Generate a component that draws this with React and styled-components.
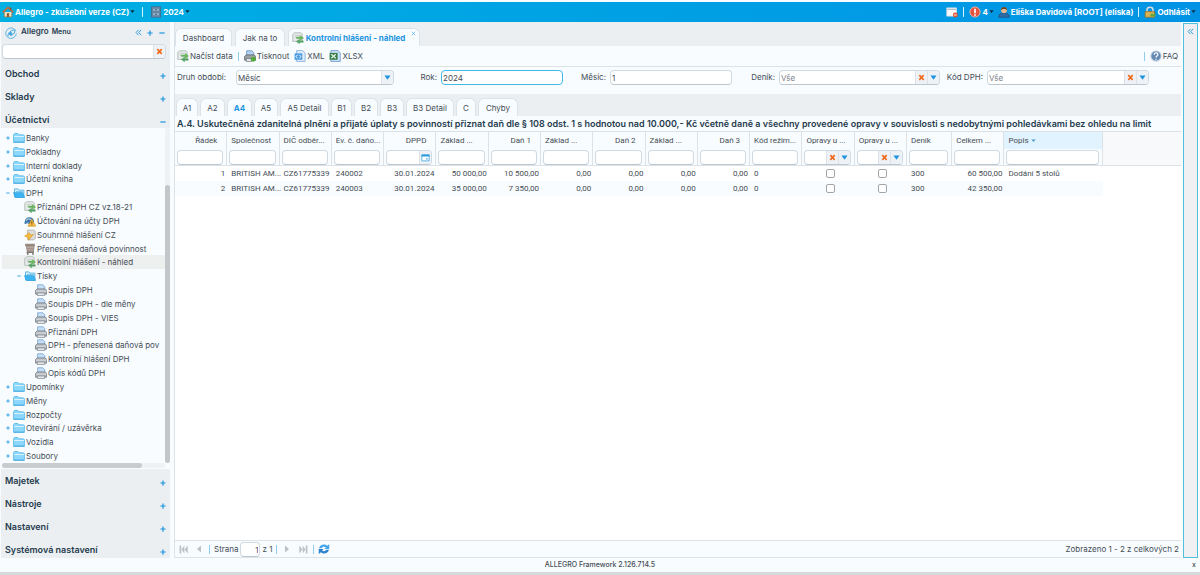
import React from "react";
import styled, { createGlobalStyle, css } from "styled-components";

const c = {
  pane: "#f8fcff",
  bar: "#eceff2",
  line: "#dbe3e9",
  text: "#454d55",
  dark: "#1f3b4d",
  blue: "#1c94e0",
  orange: "#f06a1d",
};

const Global = createGlobalStyle`
  *, *::before, *::after { box-sizing: border-box; }
  body {
    margin: 0;
    background: ${c.pane};
    color: ${c.text};
    font: 400 8px/12px Inter, "Open Sans", sans-serif;
  }
  button, input, select { font: inherit; color: inherit; margin: 0; padding: 0; border: 0; background: none; }
  button { cursor: pointer; }
  ul { list-style: none; margin: 0; padding: 0; }
  a { color: inherit; text-decoration: none; }
  svg { display: block; flex: none; }
`;

/* ---------- icons ---------- */

const Svg = ({ size = 12, children }) => (
  <svg width={size} height={size} viewBox="0 0 16 16" fill="none" aria-hidden="true">{children}</svg>
);

const icons = {
  folder: <>
    <path d="M.8 13.800V3.500L2 2h4.500L8 3.800h6L15.200 5v8.800z" fill="#8ed8fb" stroke="#4ab2e6" />
    <path d="M1.500 6h13" stroke="#d9f3fe" strokeWidth="1.400" />
    <path d="M1 13.500h14" stroke="#35a3de" />
  </>,
  open: <>
    <path d="M2 13V2.500h4.500L8 4.200h6.500V13z" fill="#d2effc" stroke="#35a3de" />
    <path d="M.8 7.500h12L15.500 14H3z" fill="#3db5f2" stroke="#2c9ddb" />
    <path d="M4 6h9" stroke="#5abdee" />
  </>,
  sync: <>
    <path d="M1 3 3.500 1H12l1.500 1.500V12.500H1z" fill="#e6eae8" stroke="#a5b0ac" />
    <path d="M3.500 4.500h7M3.500 7h4" stroke="#b9c4c0" />
    <path d="M6 8.500V6.800h5V4.800l4.500 3.200L11 11V8.500z" fill="#6dbb5d" stroke="#4b9a48" strokeWidth=".5" />
    <path d="M15 13.800h-5v2L5.800 12.600 10 9.800v2h5z" fill="#58a965" stroke="#3b8a50" strokeWidth=".5" />
  </>,
  ledger: <>
    <path d="M.8 11c0-6 3-8 6.500-8s6 2 6 6v3H.8z" fill="#4277a8" />
    <path d="M2.500 7.500c2-3 6-3 8 0" stroke="#b5d0e6" strokeWidth="1.600" />
    <path d="M3 11h3" stroke="#cfe1f0" strokeWidth="1.500" />
    <path d="M10.500 5.500 15.800 15H5.200z" fill="#f8bd45" stroke="#d08f1c" strokeWidth=".8" />
    <path d="M10.500 8.500v3.300M10.500 12.800V14" stroke="#5b4210" strokeWidth="1.200" />
  </>,
  summary: <>
    <path d="M4.500 1.500h9l1.500 2v9l-2 2H5z" fill="#dedddb" stroke="#a9a7a2" />
    <path d="M.8 9.500 7 5l1.500 3.200L12.500 7 6 15l-.8-4z" fill="#f6bb3e" stroke="#d8941d" strokeWidth=".8" />
  </>,
  cart: <>
    <path d="M1.500 1h13v3h-13z" fill="#9a8b83" />
    <path d="M3 4h10.500l-1 8h-8z" fill="#c2b2a8" stroke="#8a7c75" />
    <path d="M4 7h8.500M4.500 9.500h8" stroke="#8a7b73" />
    <path d="M3.500 12.500h9.500" stroke="#766a64" strokeWidth="1.500" />
    <circle cx="5" cy="14.500" r="1.200" fill="#666" /><circle cx="12" cy="14.500" r="1.200" fill="#666" />
  </>,
  printer: <>
    <path d="M3.500 7.500V1h7L13 3.500v4z" fill="#c5dff7" stroke="#6f9ccb" />
    <path d="M.8 8.500 3 6.500h10.500l2 2v5H.8z" fill="#b4b9bf" stroke="#6c737b" />
    <path d="M1.500 9.500h13.500" stroke="#e9ebee" />
    <path d="M3 12h10v3.200H3z" fill="#eef1f4" stroke="#7a828a" />
  </>,
  print: <>
    <path d="M3.500 7.500V1h7L13 3.500v4z" fill="#b5d4f5" stroke="#5d88b6" />
    <path d="M.8 8.500 3 6.500h10.500l2 2v5H.8z" fill="#9ba2a5" stroke="#545b5f" />
    <path d="M3 11.500h7v3.700H3z" fill="#eef1f4" stroke="#6a7278" />
    <circle cx="12.300" cy="12.200" r="3.300" fill="#52aa3b" />
  </>,
  xml: <>
    <path d="M3.500.8H11.500L14.800 4v11.200H3.500z" fill="#dcecfb" stroke="#7ba7d6" />
    <path d="M.8 4.500H11v8.500H.8z" fill="#4a9be0" />
    <path d="M4.800 6.500 2.500 8.800l2.300 2.200M7 6.500l2.300 2.300L7 11" stroke="#fff" strokeWidth="1.300" />
  </>,
  xlsx: <>
    <path d="M2.500.8h9.500L15 4v11.200H2.500z" fill="#cfe1f8" stroke="#5d8dcb" />
    <path d="M.8 3.800H11.500V13H.8z" fill="#357c48" />
    <path d="m3 5.800 6 5.200M9 5.800 3 11" stroke="#e3f4e6" strokeWidth="1.700" />
  </>,
  house: <>
    <path d="M3 8v6.500h10V8" fill="#f3e2c1" stroke="#a57848" />
    <path d="M1 8.500 8 2l7 6.500" stroke="#c06a3e" strokeWidth="2.200" />
    <path d="M6.500 14.500v-5h3v5z" fill="#8a5a34" />
    <path d="M11.500 2v3" stroke="#7b4f32" strokeWidth="2" />
  </>,
  drawer: <>
    <path d="M2 1h12v14H2z" fill="#6f94b5" stroke="#46627c" />
    <path d="M3.500 3h9v4h-9zM3.500 9h9v4h-9z" fill="#9fbbd4" stroke="#56758f" />
    <path d="M6.500 5h3M6.500 11h3" stroke="#2c4256" />
  </>,
  window: <>
    <path d="M1 2.500h13v11H1z" fill="#f9f9f9" stroke="#d3dbe1" />
    <path d="M1.500 4.500h12" stroke="#a9bccb" strokeWidth="1.500" />
    <circle cx="12.500" cy="12" r="3.300" fill="#e3552c" />
    <path d="M10.800 12h3.400" stroke="#fff" strokeWidth="1.300" />
  </>,
  alert: <>
    <circle cx="8" cy="8" r="6.800" fill="#e5533d" stroke="#f5b5a5" strokeWidth="1.200" />
    <path d="M8 3.500v6M8 11v2" stroke="#fff" strokeWidth="2.200" />
  </>,
  user: <>
    <path d="M1 15c0-4.500 3-6 7-6s7 1.500 7 6z" fill="#2f6ca5" stroke="#205181" />
    <circle cx="8" cy="5.500" r="3.800" fill="#e9b98d" />
    <path d="M4 5.500C3.500 0 12.500 0 12 5.500 10.500 3.500 6 3.500 4 5.500z" fill="#6a4327" />
  </>,
  lock: <>
    <path d="M4 8V5a4 3.500 0 0 1 8 0v3" stroke="#d8dde1" strokeWidth="2" />
    <path d="M1.500 7.500H14V15H1.500z" fill="#d8b254" stroke="#94701d" />
    <path d="m8 12 3-2.500V11h4.500v2.500H11V15z" fill="#58a83f" />
  </>,
  help: <>
    <circle cx="8" cy="8" r="6.800" fill="#6288b3" stroke="#bccddf" strokeWidth="1.400" />
    <path d="M5.500 6.200C5.500 3 10.500 3 10.500 6c0 2-2.500 2-2.500 4M8 11.500v1.500" stroke="#fff" strokeWidth="1.700" />
  </>,
  refresh: <>
    <path d="M1.500 7C2.500 1.500 9.500 1 12 3.800L15 1.500V8H8.500l2-2C8.500 4.500 6 5 5 7z" fill="#45a5ea" />
    <path d="M14.500 9c-1 5.500-8 6-10.500 3.200L1 14.500V8h6.500l-2 2c2 1.500 4.500 1 5.500-1z" fill="#2f83cc" />
  </>,
  logo: <>
    <path d="M12 2.500A7 7 0 1 0 15 8.500" stroke="#35a7de" strokeWidth="1" />
    <path d="M4 12.500C4 7 8 4.500 13.500 3.500 13 8.500 10.500 11.500 7 11" stroke="#2698d8" strokeWidth="1.200" />
    <circle cx="7.500" cy="8.800" r="2.200" fill="#35a7de" />
  </>,
  calendar: <>
    <path d="M1.500 3h13v11h-13z" fill="#fff" stroke="#49a8e0" strokeWidth="1.500" />
    <path d="M1 4.500h14" stroke="#2a99dd" strokeWidth="3" />
    <path d="M9 10.500h3" stroke="#49a8e0" strokeWidth="2" />
  </>,
  plus: <path d="M8 1v14M1 8h14" stroke={c.blue} strokeWidth="3.200" />,
  minus: <path d="M1 8h14" stroke={c.blue} strokeWidth="3.200" />,
  collapse: <path d="M8 2 2.500 8 8 14M14 2 8.500 8l5.500 6" stroke={c.blue} strokeWidth="2" />,
  cross: <path d="m3 2.500 10 11M13 2.500l-10 11" stroke={c.orange} strokeWidth="3.800" />,
  close: <path d="m2.500 2.500 11 11M13.500 2.500l-11 11" stroke="#5eb2e8" strokeWidth="2.400" />,
  arrow: <path d="M1 3.500h14L8 13z" fill={c.blue} />,
  caret: <path d="M1 4h14L8 13z" fill="#0b3145" />,
  sort: <path d="M1 5h14l-7 8z" fill="#4a9bd0" />,
  first: <path d="M1 1h3v14H1zM9.500 1v14L4.500 8zM15.500 1v14l-5.500-7z" fill="#bcc1c5" />,
  prev: <path d="M12 1v14L4 8z" fill="#bcc1c5" />,
  next: <path d="M4 1v14l8-7z" fill="#bcc1c5" />,
  last: <path d="M15 1h-3v14h3zM6.500 1v14l5-7zM.5 1v14L6 8z" fill="#bcc1c5" />,
};

const Icon = ({ name, size }) => <Svg size={size}>{icons[name]}</Svg>;

/* ---------- page frame ---------- */

const Page = styled.div`
  min-height: 100vh;
  display: flex;
  flex-direction: column;
  border-bottom: 3px solid #d6dadd;
`;

const TopBar = styled.header`
  display: flex;
  justify-content: space-between;
  height: 20px;
  margin-top: 2px;
  padding: 0 4px 1px 2px;
  background: linear-gradient(90deg, #00b0e3, #0093e5);
  color: #fff;
  font-weight: 700;
`;

const BarGroup = styled.div`
  display: flex;
  align-items: center;
  gap: 4px;
`;

const BarButton = styled.button`
  display: flex;
  align-items: center;
  gap: 1px;
  white-space: nowrap;
`;

const BarRule = styled.span`
  width: 1px;
  height: 10px;
  margin: 0 ${(p) => (p.$wide ? 3 : 1)}px;
  background: #d8f1fb;
`;

const Body = styled.div`
  flex: 1;
  display: grid;
  grid-template-columns: 172px minmax(0, 1fr) 15px;
  column-gap: 2px;
  padding-right: 2px;
`;

const Footer = styled.footer`
  display: grid;
  grid-template-columns: 1fr auto 1fr;
  align-items: center;
  height: 14px;
  padding: 0 4px;
  font-size: 7px;
  font-weight: 500;

  button { justify-self: end; }
`;

/* ---------- sidebar ---------- */

const Side = styled.nav`
  display: flex;
  flex-direction: column;
  margin: 0 2px 0 1px;
  background: ${c.bar};
`;

const SideHead = styled.div`
  display: flex;
  align-items: center;
  gap: 4px;
  height: 21px;
  padding: 0 4px;
  color: ${c.dark};
  font-weight: 600;
`;

const Brand = styled.span`
  flex: 1;
  padding-bottom: 3px;

  small { margin-left: 3px; font-size: 7px; }
`;

const Glyph = styled.button`
  display: flex;
  align-items: center;
  justify-content: center;
  width: ${(p) => (p.$wide ? 12 : 8)}px;
  height: 12px;
`;

const Box = styled.div`
  display: flex;
  align-items: stretch;
  width: ${(p) => p.$width || "100%"};
  height: 15px;
  overflow: hidden;
  background: #fff;
  border: 1px solid ${(p) => (p.$focus ? "#3fb8ea" : "#d0dae2")};
  border-bottom-color: ${(p) => (p.$focus ? "#3fb8ea" : "#bcc7cf")};
  border-radius: 4px;

  input, select {
    flex: 1;
    min-width: 0;
    padding: 1px 1px 0;
    outline: 0;
    appearance: none;
    color: ${(p) => (p.$muted ? "#7d858c" : "inherit")};
    text-align: ${(p) => p.$align || "left"};
  }
`;

const BoxButton = styled.button`
  display: flex;
  align-items: center;
  justify-content: center;
  flex: none;
  width: 12px;
  background: #eef2f6;
  border-left: 1px solid #dbe2e8;
`;

const Search = styled.form`
  padding: 1px 4px 3px 1px;
`;

const Section = styled.button`
  display: flex;
  justify-content: space-between;
  width: 100%;
  height: 23px;
  padding: 0 4px;
  overflow: hidden;
  color: ${c.dark};
  font-size: 9px;
  font-weight: 600;
  line-height: 23px;
  text-align: left;

  svg { margin-top: 11px; }
  &:last-child { height: 20px; }
`;

const TreeArea = styled.div`
  flex: 1;
  display: grid;
  grid-template-columns: minmax(0, 1fr) 5px;
  grid-template-rows: 1fr 5px;
  padding: 0 0 1px 1px;
  background: ${c.pane};
`;

const Tree = styled.ul`
  display: grid;
  grid-auto-rows: 1fr;
  padding-top: 3px;
  overflow: hidden;
`;

const Node = styled.li`
  display: flex;
  align-items: center;
  padding-left: ${(p) => p.$level * 11}px;
  background: ${(p) => (p.$active ? "#eeefef" : "none")};
  white-space: nowrap;

  a { display: flex; align-items: center; gap: 1px; }
`;

const Toggle = styled.span`
  display: flex;
  justify-content: center;
  width: 11px;
`;

const TrackV = styled.div`
  display: flex;
  flex-direction: column;
  justify-content: flex-end;
  background: #eff2f4;
  border-radius: 3px;

  &::after { content: ""; height: 83%; border-radius: 3px; background: #c3c7ca; }
`;

const TrackH = styled.div`
  background: #eff2f4;
  border-radius: 3px;

  &::after { content: ""; display: block; width: 86%; height: 5px; border-radius: 3px; background: #c9cccf; }
`;

/* ---------- main ---------- */

const Main = styled.main`
  display: flex;
  flex-direction: column;
  min-width: 0;
  border-left: 1px solid ${c.line};
`;

const TabBar = styled.div`
  display: flex;
  align-items: flex-end;
  gap: ${(p) => (p.$small ? 2 : 3)}px;
  height: ${(p) => (p.$small ? 22 : 24)}px;
  padding-left: ${(p) => (p.$small ? 1 : 0)}px;
  background: ${c.bar};
`;

const Tab = styled.button`
  display: flex;
  align-items: center;
  justify-content: center;
  gap: 2px;
  width: ${(p) => p.$width}px;
  height: 18px;
  background: ${c.pane};
  border: 1px solid ${c.line};
  border-bottom: 0;
  border-radius: 6px 6px 0 0;
  white-space: nowrap;
  ${(p) => p.$active && css`color: ${c.blue}; font-weight: 700;`}
`;

const TabClose = styled.span`
  align-self: flex-start;
  margin: 2px 0 0 4px;
`;

const Tools = styled.div`
  display: flex;
  align-items: center;
  gap: 5px;
  height: 21px;
  padding: 0 3px 0 2px;
  border-bottom: 1px solid ${c.line};
`;

const Tool = styled.button`
  display: flex;
  align-items: center;
  gap: 1px;
`;

const Rule = styled.span`
  width: 1px;
  height: 9px;
  margin-left: ${(p) => (p.$push ? "auto" : "0")};
  background: #8fcdef;
`;

const Filters = styled.form`
  display: grid;
  grid-template-columns:
    55px minmax(0, 158fr) 39px minmax(0, 122fr) 39px minmax(0, 122fr)
    39px minmax(0, 161fr) 39px minmax(0, 162fr);
  column-gap: 4px;
  align-items: center;
  height: 27px;
  padding: 0 32px 7px 2px;

  label { text-align: right; white-space: nowrap; }
  label:first-child { text-align: left; }
`;

const Caption = styled.h1`
  height: 15px;
  margin: 0;
  padding-left: 2px;
  color: ${c.dark};
  font-size: 9px;
  font-weight: 600;
  line-height: 16px;
  white-space: nowrap;
`;

const GridPane = styled.div`
  flex: 1;
  background: linear-gradient(#f7f9fa 33px, ${c.line} 33px, ${c.line} 34px, #fff 34px);
  border-top: 1px solid ${c.line};
`;

const Table = styled.table`
  width: 928px;
  table-layout: fixed;
  border-collapse: separate;
  border-spacing: 0;
  font-family: Roboto, Inter, sans-serif;

  th, td { white-space: nowrap; }
  thead td { height: 17px; padding: 0 3px 0 2px; background: ${c.pane}; border-right: 1px solid ${c.line}; border-bottom: 1px solid ${c.line}; }
  tbody tr:nth-child(even) td { background: ${c.pane}; }
`;

const HeadCell = styled.th`
  height: 17px;
  padding: 0 ${(p) => (p.$align === "right" ? 9 : 2)}px 0 4px;
  border-right: 1px solid ${c.line};
  background: ${(p) => (p.$sorted ? "#e1f3fe" : c.pane)};
  font-weight: 400;
  text-align: ${(p) => p.$align || "left"};
  svg { display: inline-block; margin-left: 2px; }
`;

const Cell = styled.td`
  height: 15px;
  padding: 0 ${(p) => (p.$align === "right" ? 2 : 0)}px 0 4px;
  line-height: 15px;
  text-align: ${(p) => p.$align || "left"};
`;

const Check = styled.input`
  display: block;
  appearance: none;
  width: 9px;
  height: 9px;
  && { margin: 0 auto; border: 1px solid #a3a6a8; border-radius: 2px; background: #fff; }
`;

const Pager = styled.div`
  display: flex;
  align-items: center;
  gap: 4px;
  height: 18px;
  padding: 0 2px;
  border-top: 1px solid ${c.line};
  border-bottom: 1px solid ${c.line};
`;

const PageField = styled.label`
  display: flex;
  align-items: center;
  gap: 2px;
`;

const Total = styled.span`
  margin-left: auto;
`;

const RightStrip = styled.aside`
  display: flex;
  justify-content: center;
  margin-top: 1px;
  padding-top: 1px;
  background: #f0f0f2;
  border: 1px solid #4fbfdc;

  button { align-self: flex-start; }
`;

/* ---------- data ---------- */

const tree = [
  [0, "folder", "Banky", "plus"],
  [0, "folder", "Pokladny", "plus"],
  [0, "folder", "Interní doklady", "plus"],
  [0, "folder", "Účetní kniha", "plus"],
  [0, "open", "DPH", "minus"],
  [1, "sync", "Příznání DPH CZ vz.18-21"],
  [1, "ledger", "Účtování na účty DPH"],
  [1, "summary", "Souhrnné hlášení CZ"],
  [1, "cart", "Přenesená daňová povinnost"],
  [1, "sync", "Kontrolní hlášení - náhled"],
  [1, "open", "Tisky", "minus"],
  [2, "printer", "Soupis DPH"],
  [2, "printer", "Soupis DPH - dle měny"],
  [2, "printer", "Soupis DPH - VIES"],
  [2, "printer", "Přiznání DPH"],
  [2, "printer", "DPH - přenesená daňová pov"],
  [2, "printer", "Kontrolní hlášení DPH"],
  [2, "printer", "Opis kódů DPH"],
  [0, "folder", "Upomínky", "plus"],
  [0, "folder", "Měny", "plus"],
  [0, "folder", "Rozpočty", "plus"],
  [0, "folder", "Otevírání / uzávěrka", "plus"],
  [0, "folder", "Vozidla", "plus"],
  [0, "folder", "Soubory", "plus"],
];

const sheets = [
  ["A1", 22], ["A2", 25], ["A4", 25], ["A5", 24], ["A5 Detail", 49], ["B1", 21],
  ["B2", 24], ["B3", 24], ["B3 Detail", 48], ["C", 20], ["Chyby", 40],
];

const columns = [
  ["Řádek", 52, "right"],
  ["Společnost", 52],
  ["DIČ odběr...", 52],
  ["Ev. č. daňo...", 52],
  ["DPPD", 52, "right", "date"],
  ["Základ ...", 52],
  ["Daň 1", 52, "right"],
  ["Základ ...", 52],
  ["Daň 2", 52, "right"],
  ["Základ ...", 52],
  ["Daň 3", 52, "right"],
  ["Kód režim...", 52],
  ["Opravy u ...", 52, "left", "combo"],
  ["Opravy u ...", 52, "left", "combo"],
  ["Deník", 45],
  ["Celkem ...", 52],
  ["Popis", 98, "left", "sorted"],
];

const rows = [
  ["1", "BRITISH AM...", "CZ61775339", "240002", "30.01.2024", "50 000,00", "10 500,00", "0,00", "0,00", "0,00", "0,00", "0", null, null, "300", "60 500,00", "Dodání 5 stolů"],
  ["2", "BRITISH AM...", "CZ61775339", "240003", "30.01.2024", "35 000,00", "7 350,00", "0,00", "0,00", "0,00", "0,00", "0", null, null, "300", "42 350,00", ""],
];

const numeric = new Set([0, 4, 5, 6, 7, 8, 9, 10, 15]);

const Clear = () => <BoxButton type="button" aria-label="Vymazat"><Icon name="cross" size={7} /></BoxButton>;
const Open = () => <BoxButton type="button" aria-label="Rozbalit"><Icon name="arrow" size={7} /></BoxButton>;

const Accordion = ({ items }) => (
  <div>
    {items.map(([name, icon]) => (
      <Section key={name} type="button">{name}<Icon name={icon} size={6} /></Section>
    ))}
  </div>
);

export default function App() {
  return (
    <Page>
      <Global />
      <TopBar>
        <BarGroup>
          <BarButton><Icon name="house" />Allegro - zkušební verze (CZ)<Icon name="caret" size={5} /></BarButton>
          <BarRule $wide />
          <BarButton><Icon name="drawer" />2024<Icon name="caret" size={5} /></BarButton>
        </BarGroup>
        <BarGroup>
          <BarButton aria-label="Okna"><Icon name="window" /></BarButton>
          <BarRule />
          <BarButton><Icon name="alert" />4<Icon name="caret" size={5} /></BarButton>
          <BarButton><Icon name="user" />Eliška Davidová [ROOT] (eliska)</BarButton>
          <BarRule />
          <BarButton><Icon name="lock" />Odhlásit<Icon name="caret" size={5} /></BarButton>
        </BarGroup>
      </TopBar>

      <Body>
        <Side>
          <SideHead>
            <Icon name="logo" size={12} />
            <Brand>Allegro<small>Menu</small></Brand>
            <Glyph aria-label="Skrýt"><Icon name="collapse" size={7} /></Glyph>
            <Glyph aria-label="Rozbalit vše"><Icon name="plus" size={6} /></Glyph>
            <Glyph aria-label="Sbalit vše"><Icon name="minus" size={6} /></Glyph>
          </SideHead>
          <Search>
            <Box><input aria-label="Hledat v menu" /><Clear /></Box>
          </Search>
          <Accordion items={[["Obchod", "plus"], ["Sklady", "plus"], ["Účetnictví", "minus"]]} />
          <TreeArea>
            <Tree>
              {tree.map(([level, icon, label, toggle], i) => (
                <Node key={i} $level={level} $active={i === 9}>
                  <Toggle>{toggle && <Icon name={toggle} size={4} />}</Toggle>
                  <a href="#"><Icon name={icon} />{label}</a>
                </Node>
              ))}
            </Tree>
            <TrackV />
            <TrackH />
          </TreeArea>
          <Accordion items={[["Majetek", "plus"], ["Nástroje", "plus"], ["Nastavení", "plus"], ["Systémová nastavení", "plus"]]} />
        </Side>

        <Main>
          <TabBar>
            <Tab $width={57}>Dashboard</Tab>
            <Tab $width={50}>Jak na to</Tab>
            <Tab $width={132} $active>
              <Icon name="sync" />Kontrolní hlášení - náhled
              <TabClose><Icon name="close" size={5} /></TabClose>
            </Tab>
          </TabBar>
          <Tools>
            <Tool><Icon name="sync" />Načíst data</Tool>
            <Rule />
            <Tool><Icon name="print" />Tisknout</Tool>
            <Tool><Icon name="xml" />XML</Tool>
            <Tool><Icon name="xlsx" />XLSX</Tool>
            <Rule $push />
            <Tool><Icon name="help" />FAQ</Tool>
          </Tools>
          <Filters>
            <label htmlFor="period">Druh období:</label>
            <Box><select id="period"><option>Měsíc</option></select><Open /></Box>
            <label htmlFor="year">Rok:</label>
            <Box $focus><input id="year" defaultValue="2024" autoFocus /></Box>
            <label htmlFor="month">Měsíc:</label>
            <Box><input id="month" defaultValue="1" /></Box>
            <label htmlFor="journal">Deník:</label>
            <Box $muted><select id="journal"><option>Vše</option></select><Clear /><Open /></Box>
            <label htmlFor="vat">Kód DPH:</label>
            <Box $muted><select id="vat"><option>Vše</option></select><Clear /><Open /></Box>
          </Filters>
          <TabBar $small>
            {sheets.map(([name, width]) => (
              <Tab key={name} $width={width} $active={name === "A4"}>{name}</Tab>
            ))}
          </TabBar>
          <Caption>
            A.4. Uskutečněná zdanitelná plnění a přijaté úplaty s povinností přiznat daň dle § 108 odst. 1 s hodnotou nad 10.000,- Kč včetně daně a všechny provedené opravy v souvislosti s nedobytnými pohledávkami bez ohledu na limit
          </Caption>
          <GridPane>
            <Table>
              <colgroup>{columns.map(([, w], i) => <col key={i} width={w} />)}</colgroup>
              <thead>
                <tr>
                  {columns.map(([name, , align, kind], i) => (
                    <HeadCell key={i} $align={align} $sorted={kind === "sorted"}>
                      {name}{kind === "sorted" && <Icon name="sort" size={5} />}
                    </HeadCell>
                  ))}
                </tr>
                <tr>
                  {columns.map(([name, , , kind], i) => (
                    <td key={i}>
                      <Box>
                        <input aria-label={`Filtr ${name}`} />
                        {kind === "date" && <BoxButton aria-label="Kalendář"><Icon name="calendar" size={9} /></BoxButton>}
                        {kind === "combo" && <><Clear /><Open /></>}
                      </Box>
                    </td>
                  ))}
                </tr>
              </thead>
              <tbody>
                {rows.map((row) => (
                  <tr key={row[0]}>
                    {row.map((value, i) => (
                      <Cell key={i} $align={numeric.has(i) ? "right" : "left"}>
                        {value === null ? <Check type="checkbox" aria-label={columns[i][0]} /> : value}
                      </Cell>
                    ))}
                  </tr>
                ))}
              </tbody>
            </Table>
          </GridPane>
          <Pager>
            <Glyph $wide aria-label="První"><Icon name="first" size={9} /></Glyph>
            <Glyph $wide aria-label="Předchozí"><Icon name="prev" size={8} /></Glyph>
            <Rule />
            <PageField>Strana<Box as="span" $width="20px" $align="right"><input defaultValue="1" /></Box>z 1</PageField>
            <Rule />
            <Glyph $wide aria-label="Další"><Icon name="next" size={8} /></Glyph>
            <Glyph $wide aria-label="Poslední"><Icon name="last" size={9} /></Glyph>
            <Rule />
            <Glyph $wide aria-label="Obnovit"><Icon name="refresh" /></Glyph>
            <Total>Zobrazeno 1 - 2 z celkových 2</Total>
          </Pager>
        </Main>

        <RightStrip>
          <Glyph aria-label="Zobrazit panel"><Icon name="collapse" size={7} /></Glyph>
        </RightStrip>
      </Body>

      <Footer>
        <span />
        <span>ALLEGRO Framework 2.126.714.5</span>
        <button aria-label="Zavřít">x</button>
      </Footer>
    </Page>
  );
}
